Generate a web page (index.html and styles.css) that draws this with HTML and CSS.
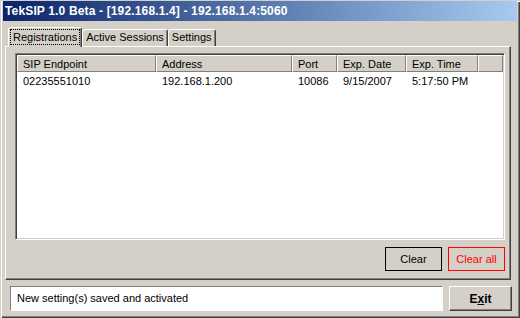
FILE: index.html
```html
<!DOCTYPE html>
<html lang="en">
<head>
    <meta charset="UTF-8">
    <title>TekSIP 1.0 Beta</title>
    <link rel="stylesheet" href="styles.css">
</head>
<body>

<div class="window">
    <div class="titlebar">TekSIP 1.0 Beta - [192.168.1.4] - 192.168.1.4:5060</div>

    <div class="client">
        <div class="tabs">
            <div class="tab active"><span class="focus">Registrations</span></div>
            <div class="tab">Active Sessions</div>
            <div class="tab">Settings</div>
        </div>

        <div class="panel">
            <div class="listview">
                <table>
                    <colgroup>
                        <col class="c-endpoint">
                        <col class="c-address">
                        <col class="c-port">
                        <col class="c-date">
                        <col class="c-time">
                        <col>
                    </colgroup>
                    <thead>
                        <tr>
                            <th>SIP Endpoint</th>
                            <th>Address</th>
                            <th>Port</th>
                            <th>Exp. Date</th>
                            <th>Exp. Time</th>
                            <th></th>
                        </tr>
                    </thead>
                    <tbody>
                        <tr>
                            <td>02235551010</td>
                            <td>192.168.1.200</td>
                            <td>10086</td>
                            <td>9/15/2007</td>
                            <td>5:17:50 PM</td>
                            <td></td>
                        </tr>
                    </tbody>
                </table>
            </div>

            <div class="actions">
                <button class="btn btn-clear">Clear</button>
                <button class="btn btn-clear-all">Clear all</button>
            </div>
        </div>

        <div class="statusrow">
            <div class="status">New setting(s) saved and activated</div>
            <button class="btn btn-exit">E<u>x</u>it</button>
        </div>
    </div>
</div>

</body>
</html>
```

FILE: styles.css
```css
* {
    box-sizing: border-box;
}

body {
    margin: 0;
    background: #d4d0c8;
    font-family: 'Liberation Sans', Arial, sans-serif;
    font-size: 11px;
    color: #000;
}

.window {
    width: 520px;
    height: 318px;
    padding: 1px 3px 3px 3px;
    background: #d4d0c8;
    box-shadow: inset 1px 1px 0 #d4d0c8, inset 2px 2px 0 #fff,
                inset -1px -1px 0 #404040, inset -2px -2px 0 #808080;
}

.titlebar {
    height: 20px;
    line-height: 20px;
    padding-left: 2px;
    color: #fff;
    font-size: 12px;
    font-weight: bold;
    letter-spacing: 0.15px;
    background: linear-gradient(to right, #0a246a, #a6caf0);
    white-space: nowrap;
}

.client {
    padding: 6px 6px 0 2px;
}

/* tabs */
.tabs {
    display: flex;
    align-items: flex-end;
    height: 19px;
    padding-left: 3px;
}

.tab {
    height: 17px;
    line-height: 15px;
    padding: 0 3px;
    border: 1px solid;
    border-bottom: none;
    border-color: #fff #404040 transparent #fff;
    border-radius: 3px 3px 0 0;
    box-shadow: inset -1px 0 0 #808080;
    background: #d4d0c8;
    white-space: nowrap;
}

.tab.active {
    position: relative;
    z-index: 1;
    height: 20px;
    margin-bottom: -1px;
    padding: 0 1px;
}

.focus {
    display: block;
    height: 16px;
    margin-top: 1px;
    padding: 0 2px;
    line-height: 14px;
    border: 1px dotted #000;
}

/* tab page */
.panel {
    height: 234px;
    padding: 6px 5px 0 9px;
    border: 1px solid;
    border-color: #fff #404040 #404040 #fff;
    box-shadow: inset -1px -1px 0 #808080;
}

.listview {
    height: 187px;
    background: #fff;
    border: 1px solid;
    border-color: #808080 #fff #fff #808080;
    box-shadow: inset 1px 1px 0 #404040, inset -1px -1px 0 #d4d0c8;
    padding: 1px;
    overflow: hidden;
}

table {
    width: 100%;
    table-layout: fixed;
    border-collapse: separate;
    border-spacing: 0;
}

.c-endpoint { width: 139px; }
.c-address { width: 136px; }
.c-port { width: 45px; }
.c-date { width: 69px; }
.c-time { width: 72px; }

th {
    height: 17px;
    padding: 0 5px;
    font-weight: normal;
    text-align: left;
    background: #d4d0c8;
    border: 1px solid;
    border-color: #fff #808080 #808080 #fff;
    white-space: nowrap;
}

td {
    height: 16px;
    padding: 2px 6px 0 6px;
    line-height: 14px;
    white-space: nowrap;
}

.actions {
    display: flex;
    justify-content: flex-end;
    gap: 6px;
    margin-top: 7px;
}

.btn {
    width: 57px;
    height: 24px;
    padding: 0;
    font-family: inherit;
    font-size: 11px;
    color: #000;
    background: #d4d0c8;
    border: 1px solid #000;
}

.btn-clear-all {
    border-color: #ff0000;
    color: #ff0000;
}

/* bottom line */
.statusrow {
    display: flex;
    gap: 6px;
    margin: 6px -1px 0 0;
    padding-left: 5px;
}

.status {
    flex: 1;
    height: 25px;
    line-height: 23px;
    padding-left: 6px;
    background: #fff;
    border: 1px solid;
    border-color: #808080 #fff #fff #808080;
}

.btn-exit {
    width: 63px;
    height: 25px;
    font-size: 12px;
    font-weight: bold;
    border-color: #fff #404040 #404040 #fff;
    box-shadow: inset -1px -1px 0 #808080;
}
```
